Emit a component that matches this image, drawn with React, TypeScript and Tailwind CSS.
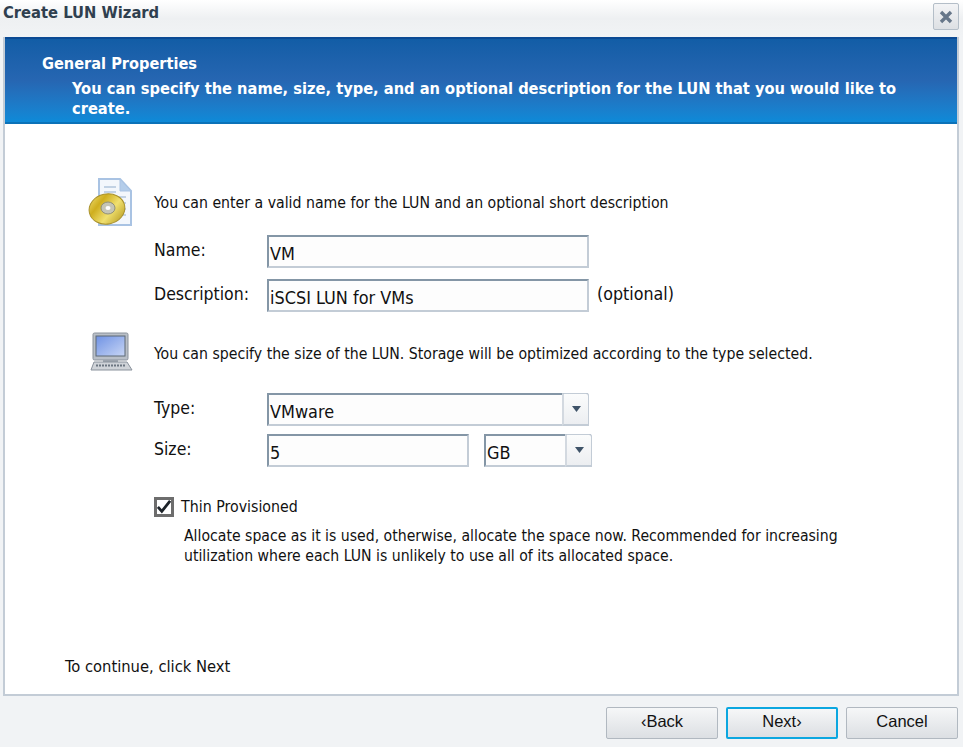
import React from 'react';

const font = "font-['DejaVu_Sans_Condensed','DejaVu_Sans',sans-serif]";
const inputBox =
  'h-[33px] border-2 border-t-[#8496a6] border-l-[#8496a6] border-r-[#c3ccd6] border-b-[#c3ccd6] bg-[#fdfdfd] flex items-center pl-px pt-[5px] text-[17.9px] text-[#111]';

const DocDiscIcon = () => (
  <svg width="50" height="50" viewBox="0 0 50 50" className="block">
    <defs>
      <linearGradient id="disc" x1="0" y1="0" x2="1" y2="1">
        <stop offset="0" stopColor="#f2e27a" />
        <stop offset="0.3" stopColor="#cfae1e" />
        <stop offset="0.6" stopColor="#f0e070" />
        <stop offset="1" stopColor="#b09314" />
      </linearGradient>
    </defs>
    <path d="M14 2h21l11 12v34H14z" fill="#f3f7fc" stroke="#a9c3e3" strokeWidth="2" />
    <path d="M35 2v12h11z" fill="#b4cdea" stroke="#a9c3e3" />
    <path d="M19 10h12M19 15h12M19 20h22M34 26h7M36 32h5M36 38h5" stroke="#c2d2e4" strokeWidth="2" />
    <ellipse cx="22" cy="32" rx="18" ry="15" transform="rotate(-12 22 32)" fill="url(#disc)" stroke="#a8902a" />
    <ellipse cx="23" cy="31" rx="7" ry="6" fill="#c5c5b5" stroke="#8f8f78" />
    <ellipse cx="23" cy="31" rx="2.5" ry="2" fill="#fff" />
  </svg>
);

const LaptopIcon = () => (
  <svg width="44" height="40" viewBox="0 0 44 40" className="block">
    <defs>
      <linearGradient id="screen" x1="0" y1="0" x2="1" y2="1">
        <stop offset="0" stopColor="#6f92e4" />
        <stop offset="1" stopColor="#c8d6f5" />
      </linearGradient>
    </defs>
    <rect x="3" y="1" width="35" height="27" rx="1.5" fill="#b9bfc7" stroke="#8a929c" />
    <rect x="6" y="4" width="29" height="20" fill="url(#screen)" stroke="#5d6875" />
    <rect x="13" y="28" width="15" height="2" fill="#9ca3ac" />
    <path d="M4 30h33l5 8H1z" fill="#cfd3d8" stroke="#8a929c" />
    <path d="M6 33.5h30" stroke="#6c7681" strokeWidth="2" strokeDasharray="2 1" />
  </svg>
);

const Caret = () => (
  <svg width="9" height="6" viewBox="0 0 9 6" className="block">
    <path d="M0 0h9L4.5 6z" fill="#3f5368" />
  </svg>
);

const Select = ({ value, width }: { value: string; width: string }) => (
  <div className={`${inputBox} ${width} relative rounded-tr-[3px]`}>
    <span className="flex-1">{value}</span>
    <div className="w-[27px] absolute -top-[2px] -right-[2px] h-[33px] flex items-center justify-center border-l-2 border-l-[#d3d9e0] border-r border-r-[#c3ccd6] border-t border-t-[#c3ccd6] border-b-2 border-b-[#c3ccd6] rounded-tr-[3px] bg-gradient-to-b from-[#fbfcfc] to-[#eceef1]">
      <Caret />
    </div>
  </div>
);

const WizardButton = ({ label, focused }: { label: string; focused?: boolean }) => (
  <button
    className={`w-[112px] h-[32px] pb-[3px] rounded-[2px] flex items-center justify-center text-[16.5px] text-[#111] font-['Liberation_Sans',sans-serif] bg-gradient-to-b from-[#f6f7f8] to-[#dcdfe3] ${
      focused ? 'border-2 border-[#0ca7e0]' : 'border border-[#b1b8c0]'
    }`}
  >
    {label}
  </button>
);

export default function App() {
  return (
    <div className={`w-[963px] h-[747px] overflow-hidden flex flex-col bg-[#f1f3f5] ${font}`}>
      {/* Title bar */}
      <div className="h-[37px] shrink-0 flex items-start justify-between bg-gradient-to-b from-[#ffffff] via-[#eef0f2] to-[#f1f3f5] pl-[3px] pr-[4px]">
        <h1 className="text-[16.4px] font-bold text-[#2f3f4f] leading-[26px]">Create LUN Wizard</h1>
        <button className="mt-[3px] w-[26px] h-[27px] rounded-[2px] border border-[#b4bec8] bg-gradient-to-b from-[#f3f4f6] to-[#dde0e4] flex items-center justify-center">
          <svg width="14" height="14" viewBox="0 0 14 14">
            <path d="M2 2l10 10M12 2L2 12" stroke="#67778a" strokeWidth="3.4" />
          </svg>
        </button>
      </div>

      {/* Main panel */}
      <div className="mx-[3px] mr-[4px] h-[659px] shrink-0 flex flex-col border-2 border-t-0 border-[#c3ccd6] bg-white">
        <div className="h-[87px] shrink-0 border-t-2 border-t-[#0b4a94] border-b-2 border-b-[#0c72b8] bg-gradient-to-b from-[#125da6] via-[#2666b2] to-[#0d8ad8] pl-[37px] pt-[15px] pr-[40px] text-white font-bold">
          <div className="text-[16.2px] leading-[20px]">General Properties</div>
          <p className="pl-[30px] text-[16.3px] leading-[20px] mt-[5px]">
            You can specify the name, size, type, and an optional description for the LUN that you would like to create.
          </p>
        </div>

        <div className="flex-1 flex flex-col pl-[81px] text-[15.7px] text-[#111]">
          {/* Name section */}
          <div className="flex items-center h-[52px] mt-[53px]">
            <div className="w-[68px] -ml-[1px] mr-px -mt-[2px]"><DocDiscIcon /></div>
            <span>You can enter a valid name for the LUN and an optional short description</span>
          </div>
          <div className="flex items-center pl-[68px] mt-[6px]">
            <label className="w-[113px] -mt-[3px] text-[17.5px]">Name:</label>
            <div className={`${inputBox} w-[322px]`}>VM</div>
          </div>
          <div className="flex items-center pl-[68px] mt-[11px]">
            <label className="w-[113px] -mt-[3px] text-[17.5px]">Description:</label>
            <div className={`${inputBox} w-[322px]`}>iSCSI LUN for VMs</div>
            <span className="ml-[8px] -mt-[2px] text-[17.7px]">(optional)</span>
          </div>

          {/* Size section */}
          <div className="flex items-center h-[40px] mt-[22px]">
            <div className="w-[68px] -ml-[1px] mr-px -mt-[5px] pl-[5px]"><LaptopIcon /></div>
            <span>You can specify the size of the LUN. Storage will be optimized according to the type selected.</span>
          </div>
          <div className="flex items-center pl-[68px] mt-[19px]">
            <label className="w-[113px] -mt-[3px] text-[17.5px]">Type:</label>
            <Select value="VMware" width="w-[322px]" />
          </div>
          <div className="flex items-center pl-[68px] mt-[8px]">
            <label className="w-[113px] -mt-[3px] text-[17.5px]">Size:</label>
            <div className={`${inputBox} w-[202px]`}>5</div>
            <div className="ml-[15px]"><Select value="GB" width="w-[108px]" /></div>
          </div>

          {/* Thin provisioning */}
          <div className="flex items-center pl-[68px] mt-[29px] h-[22px]">
            <div className="w-[20px] h-[20px] border-[3px] border-[#6d6d6d] bg-white flex items-center justify-center">
              <svg width="16" height="14" viewBox="0 0 16 14">
                <path d="M1 7l4.5 5L15 0" fill="none" stroke="#1c2228" strokeWidth="3.2" />
              </svg>
            </div>
            <span className="ml-[7px] text-[15.8px]">Thin Provisioned</span>
          </div>
          <p className="pl-[98px] pr-[90px] mt-[8px] leading-[20px] text-[15.65px]">
            Allocate space as it is used, otherwise, allocate the space now. Recommended for increasing utilization where each LUN is unlikely to use all of its allocated space.
          </p>

          <div className="mt-auto mb-[14px] -ml-[21px] text-[16.4px]">To continue, click Next</div>
        </div>
      </div>

      {/* Footer */}
      <div className="flex justify-end gap-[8px] pr-[5px] pt-[11px]">
        <WizardButton label="‹Back" />
        <WizardButton label="Next›" focused />
        <WizardButton label="Cancel" />
      </div>
    </div>
  );
}
